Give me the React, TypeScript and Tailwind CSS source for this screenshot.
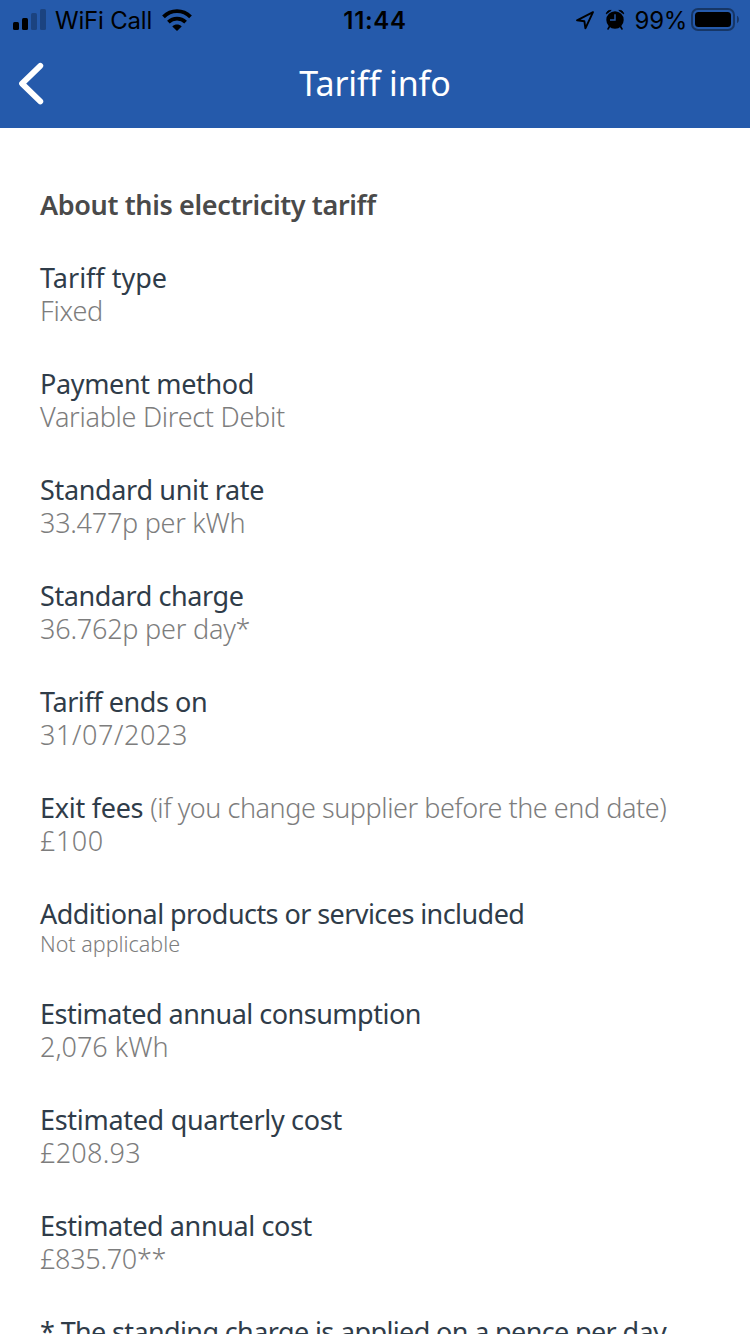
import React from "react";
import clsx from "clsx";

const details = [
  { label: "Tariff type", value: "Fixed", labelStyle: "tracking-[0px]", valueStyle: "tracking-[-0.2px]" },
  { label: "Payment method", value: "Variable Direct Debit", labelStyle: "tracking-[-0.36px]", valueStyle: "tracking-[-0.28px]" },
  { label: "Standard unit rate", value: "33.477p per kWh", labelStyle: "tracking-[-0.34px]", valueStyle: "tracking-[-0.27px]" },
  { label: "Standard charge", value: "36.762p per day*", labelStyle: "tracking-[-0.43px]", valueStyle: "tracking-[-0.22px]" },
  { label: "Tariff ends on", value: "31/07/2023", labelStyle: "tracking-[-0.43px]", valueStyle: "tracking-[0.6px]" },
  {
    label: "Exit fees",
    note: "(if you change supplier before the end date)",
    value: "£100",
    labelStyle: "tracking-[-0.27px]",
    noteStyle: "tracking-[-0.45px]",
    valueStyle: "tracking-[0.5px]",
  },
  {
    label: "Additional products or services included",
    value: "Not applicable",
    small: true,
    labelStyle: "tracking-[-0.57px]",
    valueStyle: "tracking-[0px]",
  },
  { label: "Estimated annual consumption", value: "2,076 kWh", labelStyle: "tracking-[-0.51px]", valueStyle: "tracking-[0px]" },
  { label: "Estimated quarterly cost", value: "£208.93", labelStyle: "tracking-[-0.3px]", valueStyle: "tracking-[0.25px]" },
  { label: "Estimated annual cost", value: "£835.70**", labelStyle: "tracking-[-0.38px]", valueStyle: "tracking-[-0.3px]" },
];

const SignalIcon = () => (
  <svg className="h-[22px] w-[34px]" viewBox="0 0 34 22">
    <rect x="0" y="13" width="6" height="8" rx="1.5" />
    <rect x="9" y="9" width="6" height="12" rx="1.5" />
    <rect x="18" y="4" width="6" height="17" rx="1.5" opacity="0.25" />
    <rect x="27" y="0" width="6" height="21" rx="1.5" opacity="0.25" />
  </svg>
);

const WifiIcon = () => (
  <svg className="h-[22px] w-[30px]" viewBox="0 0 30 22" fill="none" stroke="#000" strokeWidth="3.8">
    <path d="M1.5 7.8C9 0.2 21 0.2 28.5 7.8" />
    <path d="M6.4 13.1C11.2 8.5 18.8 8.5 23.6 13.1" />
    <path d="M10.3 17.4C13 14.9 17 14.9 19.7 17.4L15 22Z" fill="#000" stroke="none" />
  </svg>
);

const LocationIcon = () => (
  <svg className="h-[20px] w-[20px]" viewBox="0 0 20 20" fill="none" stroke="#000" strokeWidth="1.9" strokeLinejoin="round">
    <path d="M18 2.2L2 10.3L9.4 11.3L10.4 18.3Z" />
  </svg>
);

const AlarmIcon = () => (
  <svg className="h-[22px] w-[20px]" viewBox="0 0 20 22">
    <circle cx="10" cy="11" r="8.7" />
    <path d="M1.2 5A4.6 4.6 0 0 1 6.2 1.4ZM18.8 5A4.6 4.6 0 0 0 13.8 1.4Z" stroke="#000" strokeWidth="0.8" strokeLinejoin="round" />
    <path d="M4.5 17.5L3 20M15.5 17.5L17 20" stroke="#000" strokeWidth="1.6" strokeLinecap="round" />
    <path d="M10 5.3V11H5" stroke="#255aab" strokeWidth="1.4" fill="none" />
  </svg>
);

const BatteryIcon = () => (
  <svg className="h-[24px] w-[49px]" viewBox="0 0 49 24">
    <rect x="1" y="1" width="42" height="21" rx="6" fill="none" stroke="#000" strokeOpacity="0.4" strokeWidth="2" />
    <rect x="4" y="4" width="36" height="15" rx="3.5" />
    <path d="M46 7.8C48.6 9 48.6 14 46 15.2Z" opacity="0.4" />
  </svg>
);

const StatusBar = () => (
  <div className="grid h-10 grid-cols-3 items-center font-['Inter',sans-serif] text-[24px] leading-[30px] text-black">
    <div className="flex items-center whitespace-nowrap pl-[13px]">
      <SignalIcon />
      <span className="ml-[8px] pt-[2px] tracking-[-0.2px]">WiFi Call</span>
      <span className="ml-[10px]"><WifiIcon /></span>
    </div>
    <div className="pt-[2px] text-center font-semibold tracking-[0.7px]">11:44</div>
    <div className="flex items-center justify-end whitespace-nowrap pr-[10px]">
      <LocationIcon />
      <span className="ml-[10px]"><AlarmIcon /></span>
      <span className="ml-[10px] pt-[2px] tracking-[-0.3px]">99%</span>
      <span className="ml-[4px]"><BatteryIcon /></span>
    </div>
  </div>
);

const Header = () => (
  <header className="h-32 bg-[#255aab]">
    <StatusBar />
    <div className="grid h-[88px] grid-cols-[60px_1fr_60px] items-center">
      <button className="pl-[18px]" aria-label="Back">
        <svg className="h-[44px] w-[28px]" viewBox="0 0 28 44" fill="none" stroke="#fff" strokeWidth="5.8" strokeLinecap="round" strokeLinejoin="round">
          <path d="M22.3 3.8L4 21.6L22.3 39.4" />
        </svg>
      </button>
      <h1 className="pb-[3px] text-center text-[34px] leading-[44px] tracking-[-0.1px] text-white">Tariff info</h1>
    </div>
  </header>
);

export default function App() {
  return (
    <div className="h-[1334px] w-[750px] overflow-hidden bg-white font-['Noto_Sans',sans-serif]">
      <Header />
      <main className="flex flex-col gap-10 whitespace-nowrap pl-10 pt-[60px] text-[27px] leading-[33px] text-[#2f3c49]">
        <h2 className="font-semibold text-[#4a4a4a]">
          <span className="tracking-[-0.36px]">About this electricity tariff</span>
        </h2>
        {details.map((item) => (
          <div key={item.label}>
            <div>
              <span className={item.labelStyle}>{item.label}</span>
              {item.note && <span className={clsx("ml-[7px] font-light text-[#7d7d7d]", item.noteStyle)}>{item.note}</span>}
            </div>
            <div className={clsx("font-light text-[#7d7d7d]", item.small && "text-[21.5px] leading-[27px]")}>
              <span className={item.valueStyle}>{item.value}</span>
            </div>
          </div>
        ))}
        <p className="tracking-[-0.63px]">* The standing charge is applied on a pence per day</p>
      </main>
    </div>
  );
}
